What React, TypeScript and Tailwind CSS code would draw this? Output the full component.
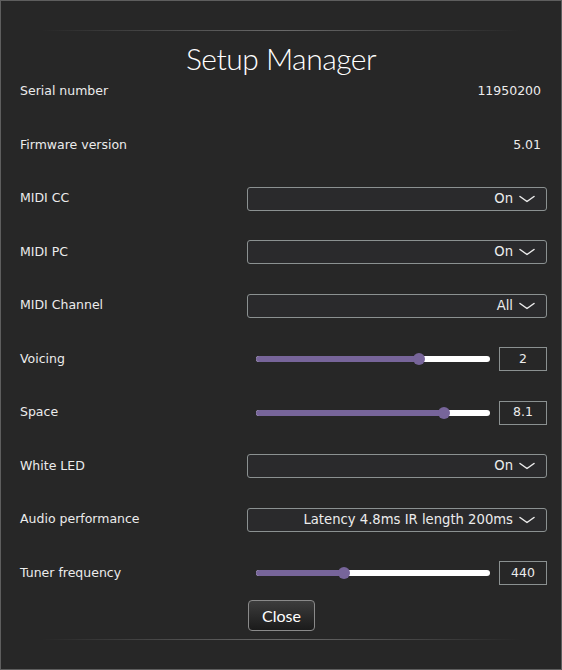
import React from "react";

const font = { fontFamily: '"DejaVu Sans", Verdana, sans-serif' };

function Chevron() {
  return (
    <svg width="16" height="8" viewBox="0 0 16 8" className="shrink-0">
      <polyline points="1,1.5 8,6.5 15,1.5" fill="none" stroke="#ececec" strokeWidth="1.5" strokeLinecap="round" strokeLinejoin="round" />
    </svg>
  );
}

function Dropdown({ value }: { value: string }) {
  return (
    <div className="w-[300px] h-[24px] rounded-[3px] border border-[#8b9191] bg-[#2a2a2c] flex items-center justify-end gap-[6px] pr-[11px] text-[13.2px] text-[#ececec]">
      <span>{value}</span>
      <Chevron />
    </div>
  );
}

function Slider({ pos, value }: { pos: number; value: string }) {
  return (
    <div className="w-[300px] flex items-center">
      <div className="w-[252px] px-[9px] flex items-center">
        <div className="relative w-full h-[6px] rounded-full bg-white">
          <div className="absolute left-0 top-0 h-full rounded-full bg-[#77659a]" style={{ width: pos }} />
          <div className="absolute top-[-3px] w-[12px] h-[12px] rounded-full bg-[#77659a]" style={{ left: pos - 6 }} />
        </div>
      </div>
      <div className="w-[48px] h-[24px] border border-[#8b9191] flex items-center justify-center text-[12.5px] text-[#ececec]">
        {value}
      </div>
    </div>
  );
}

function Row({ label, children }: { label: string; children: React.ReactNode }) {
  return (
    <div className="h-[53.5px] shrink-0 flex items-center pl-[19px] pr-[14px]">
      <div className="flex-1 text-[12.5px] text-[#ececec]">{label}</div>
      {children}
    </div>
  );
}

function TextValue({ value }: { value: string }) {
  return <div className="w-[300px] text-right pr-[6px] text-[12.5px] text-[#ececec]">{value}</div>;
}

export default function App() {
  return (
    <div className="w-[562px] h-[670px] bg-[#272727] border border-[#5e5e5e] flex flex-col" style={font}>
      <div className="h-[29px] shrink-0" />
      <div className="h-px shrink-0 mx-[40px] bg-linear-to-r from-transparent via-[#6a6a6a] to-transparent" />
      <div className="h-[34px] shrink-0 pt-[11px] text-center text-[30px] font-light leading-[33px] tracking-[-0.5px] text-white" style={{ fontFamily: 'Lato, "Open Sans", sans-serif' }}>
        Setup Manager
      </div>
      <Row label="Serial number"><TextValue value="11950200" /></Row>
      <Row label="Firmware version"><TextValue value="5.01" /></Row>
      <Row label="MIDI CC"><Dropdown value="On" /></Row>
      <Row label="MIDI PC"><Dropdown value="On" /></Row>
      <Row label="MIDI Channel"><Dropdown value="All" /></Row>
      <Row label="Voicing"><Slider pos={163} value="2" /></Row>
      <Row label="Space"><Slider pos={188} value="8.1" /></Row>
      <Row label="White LED"><Dropdown value="On" /></Row>
      <Row label="Audio performance"><Dropdown value="Latency 4.8ms IR length 200ms" /></Row>
      <Row label="Tuner frequency"><Slider pos={88} value="440" /></Row>
      <div className="shrink-0 flex justify-end pr-[14px]">
        <div className="w-[300px] pl-px">
          <button
            className="w-[67px] h-[31px] rounded-[4px] border border-[#8a8a8a] bg-linear-to-b from-[#3d3d3d] to-[#1b1b1b] text-white text-[16px] leading-none"
            style={{ fontFamily: 'Lato, "Open Sans", sans-serif' }}
          >
            Close
          </button>
        </div>
      </div>
      <div className="h-[8px] shrink-0" />
      <div className="h-px shrink-0 mx-[40px] bg-linear-to-r from-transparent via-[#6a6a6a] to-transparent" />
    </div>
  );
}
